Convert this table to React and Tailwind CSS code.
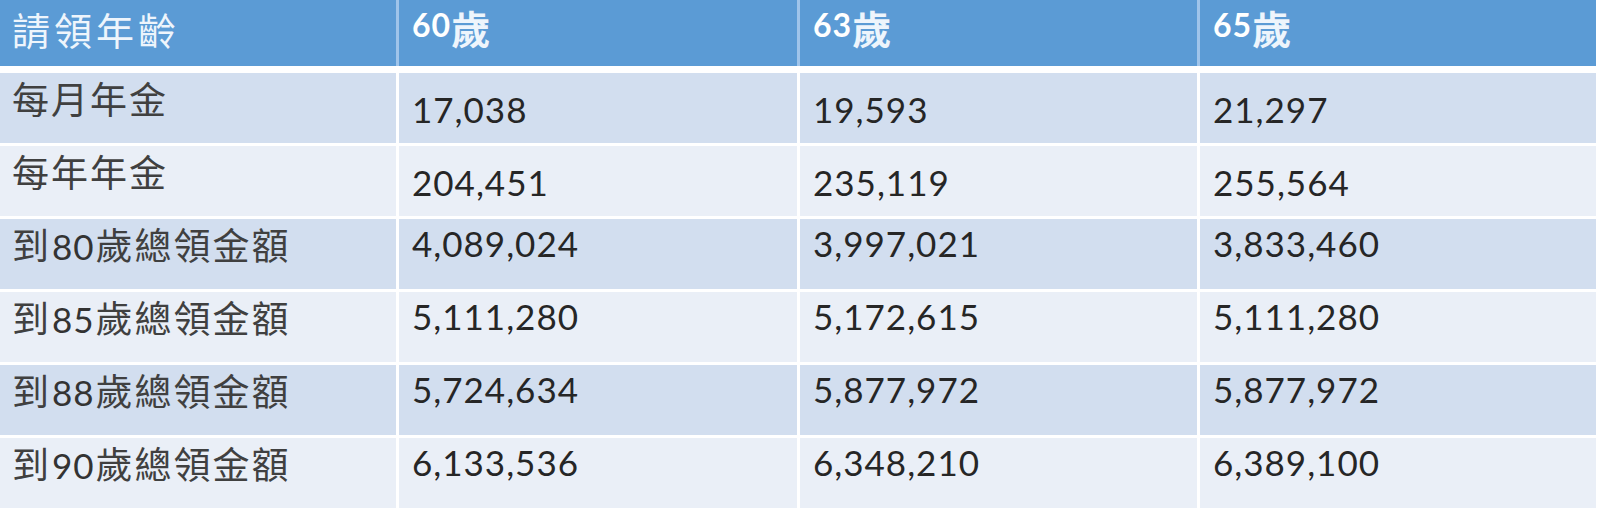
import React from "react";

const rows = [
  { label: "每月年金", vals: ["17,038", "19,593", "21,297"], low: true },
  { label: "每年年金", vals: ["204,451", "235,119", "255,564"], low: true },
  { label: "到80歲總領金額", vals: ["4,089,024", "3,997,021", "3,833,460"] },
  { label: "到85歲總領金額", vals: ["5,111,280", "5,172,615", "5,111,280"] },
  { label: "到88歲總領金額", vals: ["5,724,634", "5,877,972", "5,877,972"] },
  { label: "到90歲總領金額", vals: ["6,133,536", "6,348,210", "6,389,100"] },
];

const cjk = "font-['Noto_Sans_CJK_TC','Noto_Sans_CJK_SC',sans-serif]";
const num = "font-['Lato','Open_Sans',sans-serif]";

function Label({ text }) {
  const parts = text.split(/(\d+)/).filter(Boolean);
  return (
    <div className="flex items-baseline pl-[12px] pt-[7px] text-[#404040]">
      {parts.map((p, i) =>
        /\d/.test(p) ? (
          <span key={i} className={`${num} text-[35px] leading-none text-[#333333] tracking-[1px] px-[1px]`}>
            {p}
          </span>
        ) : (
          <span key={i} className={`${cjk} text-[37px] leading-none tracking-[2px]`}>
            {p}
          </span>
        )
      )}
    </div>
  );
}

function HeadAge({ n }) {
  return (
    <div className="flex items-start pl-[13px] text-white">
      <span className={`${num} text-[32px] font-bold leading-none pt-[9px] tracking-[1px]`}>{n}</span>
      <span className={`${cjk} text-[39px] font-bold leading-none pt-[8px] text-[#eef5fc]`}>歲</span>
    </div>
  );
}

export default function App() {
  const cols = "grid grid-cols-[396px_398px_397px_396px] gap-x-[3px]";
  return (
    <div className="w-[1600px] h-[515px] bg-white">
      <div className="w-[1596px]">
        <div className={`${cols} h-[66px] bg-[#9fc4ea]`}>
          <div className="bg-[#5b9bd5] pl-[12px] pt-[10px]">
            <span className={`${cjk} text-[38px] leading-none text-[#eef5fc] tracking-[4px]`}>請領年齡</span>
          </div>
          <div className="bg-[#5b9bd5]"><HeadAge n="60" /></div>
          <div className="bg-[#5b9bd5]"><HeadAge n="63" /></div>
          <div className="bg-[#5b9bd5]"><HeadAge n="65" /></div>
        </div>
        <div className="flex flex-col gap-y-[3px] pt-[7px]">
          {rows.map((r, i) => {
            const bg = i % 2 === 0 ? "bg-[#d2deef]" : "bg-[#eaeff7]";
            return (
              <div key={i} className={`${cols} h-[70px]`}>
                <div className={bg}>
                  <Label text={r.label} />
                </div>
                {r.vals.map((v, j) => (
                  <div key={j} className={bg}>
                    <div
                      className={`${num} text-[35px] leading-none tracking-[1px] text-[#262626] pl-[13px] ${
                        r.low ? "pt-[19px]" : "pt-[7px]"
                      }`}
                    >
                      {v}
                    </div>
                  </div>
                ))}
              </div>
            );
          })}
        </div>
      </div>
    </div>
  );
}
